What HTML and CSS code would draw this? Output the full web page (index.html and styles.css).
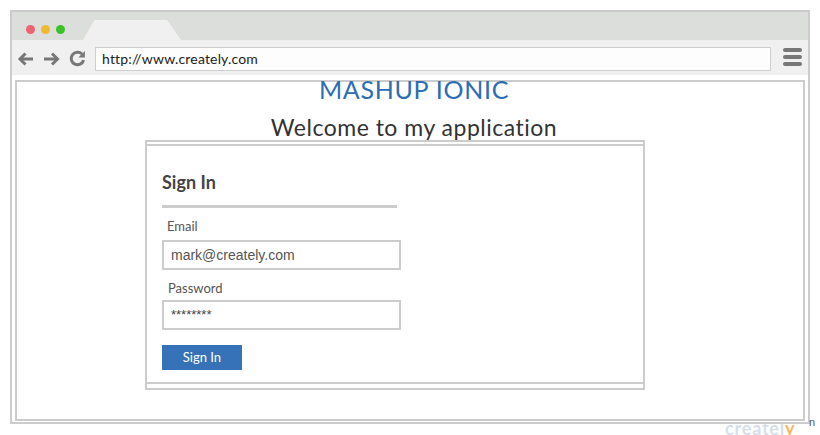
FILE: index.html
```html
<!DOCTYPE html>
<html lang="en">
<head>
<meta charset="utf-8">
<title>Mashup Ionic</title>
<link rel="stylesheet" href="styles.css">
</head>
<body>
<div class="browser">
  <div class="tabbar">
    <span class="dot dot-red"></span>
    <span class="dot dot-yellow"></span>
    <span class="dot dot-green"></span>
    <div class="tab"></div>
  </div>
  <div class="toolbar">
    <svg class="nav-icons" width="71" height="20" viewBox="0 0 71 20" aria-hidden="true">
      <g fill="none" stroke="#777" stroke-width="3">
        <path d="M3.5 11 H16"/>
        <path d="M8.5 5.5 L3 11 L8.5 16.5"/>
        <path d="M27 11 H40"/>
        <path d="M35 5.5 L40.5 11 L35 16.5"/>
        <path d="M66.6 12.1 A6.3 6.3 0 1 1 65 6.05"/>
      </g>
      <polygon points="61.4,9.6 67.9,9.6 67.9,3.1" fill="#777"/>
    </svg>
    <div class="url">http://www.creately.com</div>
    <div class="menu"><span></span><span></span><span></span></div>
  </div>
  <div class="viewport">
    <div class="page">
      <h1 class="title">MASHUP IONIC</h1>
      <h2 class="welcome">Welcome to my application</h2>
      <div class="card">
        <div class="card-body">
          <h3 class="card-heading">Sign In</h3>
          <div class="divider"></div>
          <label class="field-label field-label-first">Email</label>
          <div class="input">mark@creately.com</div>
          <label class="field-label field-label-second">Password</label>
          <div class="input input-password">********</div>
          <button class="btn">Sign In</button>
        </div>
      </div>
    </div>
  </div>
</div>
<div class="watermark">createl<span class="wm-y">y</span></div>
<span class="wm-n">n</span>
</body>
</html>
```

FILE: styles.css
```css
html, body {
  margin: 0;
  padding: 0;
  background: #fff;
}

body {
  font-family: "Lato", "Open Sans", sans-serif;
  position: relative;
  width: 820px;
  height: 435px;
  overflow: hidden;
}

.browser {
  position: relative;
  z-index: 2;
  margin: 10px;
  width: 800px;
  height: 414px;
  box-sizing: border-box;
  border: 2px solid #cccccc;
  display: flex;
  flex-direction: column;
  background: #fff;
}

.tabbar {
  height: 28px;
  background: #dcdedb;
  display: flex;
  align-items: flex-start;
  padding-left: 14px;
  box-sizing: border-box;
}

.dot {
  width: 9px;
  height: 9px;
  border-radius: 50%;
  margin-top: 13px;
  margin-right: 6px;
}

.dot-red { background: #ec6371; }
.dot-yellow { background: #efb933; }
.dot-green { background: #3cc12b; }

.tab {
  align-self: flex-end;
  margin-left: 12px;
  width: 98px;
  height: 20px;
  background: #f0f0f0;
  clip-path: polygon(11.5px 0, 84px 0, 98px 100%, 0 100%);
}

.toolbar {
  height: 35px;
  background: #f0f0f0;
  display: flex;
  align-items: flex-start;
  padding: 7px 6px 0 5px;
  box-sizing: border-box;
}

.nav-icons {
  margin-top: 1px;
  flex: none;
}

.url {
  margin-left: 7px;
  flex: 1;
  height: 24px;
  box-sizing: border-box;
  border: 1px solid #cfcfcf;
  background: #fdfdfd;
  padding-left: 6px;
  font-size: 14px;
  letter-spacing: 0.17px;
  line-height: 22px;
  color: #222;
}

.menu {
  margin-left: 12px;
  margin-top: 1px;
  width: 19px;
  display: flex;
  flex-direction: column;
  gap: 3px;
}

.menu span {
  height: 4px;
  border-radius: 2px;
  background: #777;
}

.viewport {
  flex: 1;
  padding: 5px 3px 1px 3px;
  display: flex;
}

.page {
  flex: 1;
  border: 2px solid #cccccc;
}

.title {
  margin: -5px 0 0;
  padding-left: 8px;
  text-align: center;
  font-size: 25px;
  letter-spacing: 0.7px;
  line-height: 25px;
  font-weight: 400;
  color: #2c6db4;
}

.welcome {
  margin: 12px 0 0;
  padding-left: 8px;
  text-align: center;
  font-size: 23px;
  letter-spacing: 0.5px;
  line-height: 26px;
  font-weight: 400;
  color: #333;
}

.card {
  margin-left: 128px;
  width: 500px;
  height: 250px;
  box-sizing: border-box;
  border: 2px solid #cccccc;
  padding: 2px 0 4px;
}

.card-body {
  height: 240px;
  box-sizing: border-box;
  border-top: 2px solid #cccccc;
  border-bottom: 2px solid #cccccc;
  padding: 26px 15px 0;
}

.card-heading {
  margin: 0;
  font-size: 18px;
  line-height: 20px;
  font-weight: 700;
  color: #444;
}

.divider {
  margin-top: 13px;
  width: 235px;
  height: 3px;
  background: #cccccc;
}

.field-label {
  display: block;
  padding-left: 5px;
  font-size: 13px;
  line-height: 16px;
  color: #555;
}

.field-label-first {
  margin: 10px 0 6px;
}

.field-label-second {
  margin: 10px 0 4px;
  padding-left: 6px;
}

.input {
  width: 239px;
  height: 30px;
  box-sizing: border-box;
  border: 2px solid #cccccc;
  padding-left: 7px;
  font-family: "Liberation Sans", Arial, sans-serif;
  font-size: 14px;
  line-height: 26px;
  color: #555;
}

.input-password {
  font-size: 13px;
  color: #444;
}

.btn {
  display: block;
  margin-top: 15px;
  width: 80px;
  height: 25px;
  border: 0;
  padding: 0;
  background: #3572b8;
  color: #fff;
  font-family: "Lato", sans-serif;
  font-size: 13px;
  line-height: 25px;
  text-align: center;
}

.watermark {
  position: absolute;
  z-index: 1;
  left: 725px;
  top: 417px;
  font-size: 18px;
  font-weight: 700;
  color: #d6dfe9;
  letter-spacing: 0.8px;
}

.wm-y {
  color: #f6b866;
}

.wm-n {
  position: absolute;
  z-index: 3;
  left: 809px;
  top: 416px;
  font-family: "Liberation Sans", sans-serif;
  font-size: 11px;
  color: #555;
}
```
